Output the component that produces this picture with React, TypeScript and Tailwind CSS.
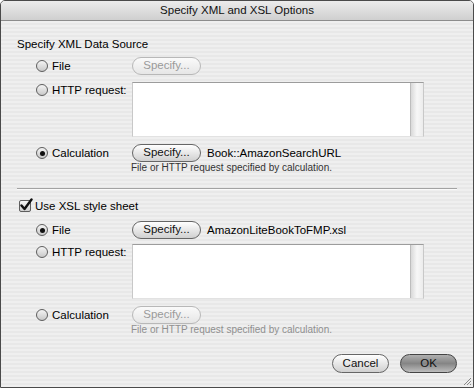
import React from 'react';

function Radio({ checked }: { checked?: boolean }) {
  return (
    <span className="w-[12px] h-[12px] rounded-full border border-[#5e5e5e] bg-gradient-to-b from-[#f4f4f4] to-[#c9c9c9] flex items-center justify-center shrink-0">
      {checked && <span className="w-[5px] h-[5px] rounded-full bg-[#111]" />}
    </span>
  );
}

function Checkbox() {
  return (
    <span className="w-[12px] h-[12px] border border-[#5e5e5e] rounded-[2px] bg-gradient-to-b from-[#f6f6f6] to-[#cfcfcf] relative shrink-0">
      <svg viewBox="0 0 14 14" className="absolute -left-[1px] -top-[3px] w-[14px] h-[14px]">
        <path d="M2.5 7.5 L5.5 11 L12.5 1.5" fill="none" stroke="#111" strokeWidth="2.4" strokeLinecap="round" strokeLinejoin="round" />
      </svg>
    </span>
  );
}

function SpecifyButton({ disabled }: { disabled?: boolean }) {
  return (
    <button
      className={`w-[69px] h-[18px] rounded-full border text-[11.5px] leading-none flex items-center justify-center bg-gradient-to-b shrink-0 ${
        disabled
          ? 'border-[#b8b8b8] text-[#9a9a9a] from-[#fafafa] to-[#e6e6e6]'
          : 'border-[#666] text-[#111] from-[#ffffff] to-[#d0d0d0]'
      }`}
    >
      Specify...
    </button>
  );
}

function TextBox() {
  return (
    <div className="w-[292px] h-[55px] bg-white border-t border-t-[#9c9c9c] border-x border-x-[#c8c8c8] border-b border-b-[#e2e2e2] flex justify-end shrink-0">
      <div className="w-[13px] h-full border-l border-l-[#bdbdbd] bg-gradient-to-r from-[#d9d9d9] via-[#f7f7f7] to-[#ececec]" />
    </div>
  );
}

function OptionRow({ label, checked, children, alignStart }: { label: string; checked?: boolean; children?: React.ReactNode; alignStart?: boolean }) {
  return (
    <div className={`flex ml-[19px] ${alignStart ? 'items-start' : 'items-center'}`}>
      <div className={`w-[96px] flex items-center gap-[4px] shrink-0 ${alignStart ? 'pt-[1px]' : ''}`}>
        <Radio checked={checked} />
        <span className="text-[11.5px] leading-[14px] text-[#000]">{label}</span>
      </div>
      {children}
    </div>
  );
}

function Note({ disabled }: { disabled?: boolean }) {
  return (
    <p className={`ml-[114px] text-[10px] leading-[12px] ${disabled ? 'text-[#8f8f8f]' : 'text-[#333]'}`}>
      File or HTTP request specified by calculation.
    </p>
  );
}

export default function App() {
  return (
    <div className="w-[475px] h-[389px] bg-white font-['Liberation_Sans',Arial,sans-serif]">
      <div className="relative w-[474px] h-[388px] border border-[#4a4a4a] rounded-t-[5px] overflow-hidden flex flex-col bg-[repeating-linear-gradient(to_bottom,#efefef_0px,#efefef_2px,#e8e8e8_2px,#e8e8e8_4px)]">
        <div className="h-[20px] shrink-0 bg-gradient-to-b from-[#ececec] to-[#cfcfcf] border-b border-b-[#8c8c8c] flex items-center justify-center">
          <span className="text-[11.5px] text-[#111]">Specify XML and XSL Options</span>
        </div>

        <div className="px-[16px] flex flex-col">
          <h2 className="mt-[16px] text-[11.5px] leading-[14px] text-[#000]">Specify XML Data Source</h2>

          <div className="mt-[6px]">
            <OptionRow label="File">
              <SpecifyButton disabled />
            </OptionRow>
          </div>
          <div className="mt-[7px]">
            <OptionRow label="HTTP request:" alignStart>
              <TextBox />
            </OptionRow>
          </div>
          <div className="mt-[7px]">
            <OptionRow label="Calculation" checked>
              <SpecifyButton />
              <span className="ml-[6px] text-[11.5px] leading-[14px] text-[#000]">Book::AmazonSearchURL</span>
            </OptionRow>
          </div>
          <Note />

          <div className="mt-[14px] h-[2px] border-t border-t-[#a3a3a3] border-b border-b-[#fafafa]" />

          <label className="mt-[9px] flex items-center gap-[4px] ml-[2px]">
            <Checkbox />
            <span className="text-[11.5px] leading-[14px] text-[#000]">Use XSL style sheet</span>
          </label>

          <div className="mt-[8px]">
            <OptionRow label="File" checked>
              <SpecifyButton />
              <span className="ml-[6px] text-[11.5px] leading-[14px] text-[#000]">AmazonLiteBookToFMP.xsl</span>
            </OptionRow>
          </div>
          <div className="mt-[5px]">
            <OptionRow label="HTTP request:" alignStart>
              <TextBox />
            </OptionRow>
          </div>
          <div className="mt-[7px]">
            <OptionRow label="Calculation">
              <SpecifyButton disabled />
            </OptionRow>
          </div>
          <Note disabled />

          <div className="mt-[18px] flex justify-end gap-[11px]">
            <button className="w-[57px] h-[19px] rounded-full border border-[#666] bg-gradient-to-b from-white to-[#d0d0d0] text-[11.5px] leading-none text-[#111]">
              Cancel
            </button>
            <button className="w-[57px] h-[19px] rounded-full border border-[#444] bg-gradient-to-b from-[#b0b0b0] via-[#858585] to-[#bdbdbd] text-[11.5px] leading-none text-[#111]">
              OK
            </button>
          </div>
        </div>

        <svg className="absolute right-[1px] bottom-[1px] w-[10px] h-[10px]" viewBox="0 0 10 10">
          <path d="M9 2 L2 9 M9 5 L5 9 M9 8 L8 9" stroke="#8a8a8a" strokeWidth="1" />
        </svg>
      </div>
    </div>
  );
}
